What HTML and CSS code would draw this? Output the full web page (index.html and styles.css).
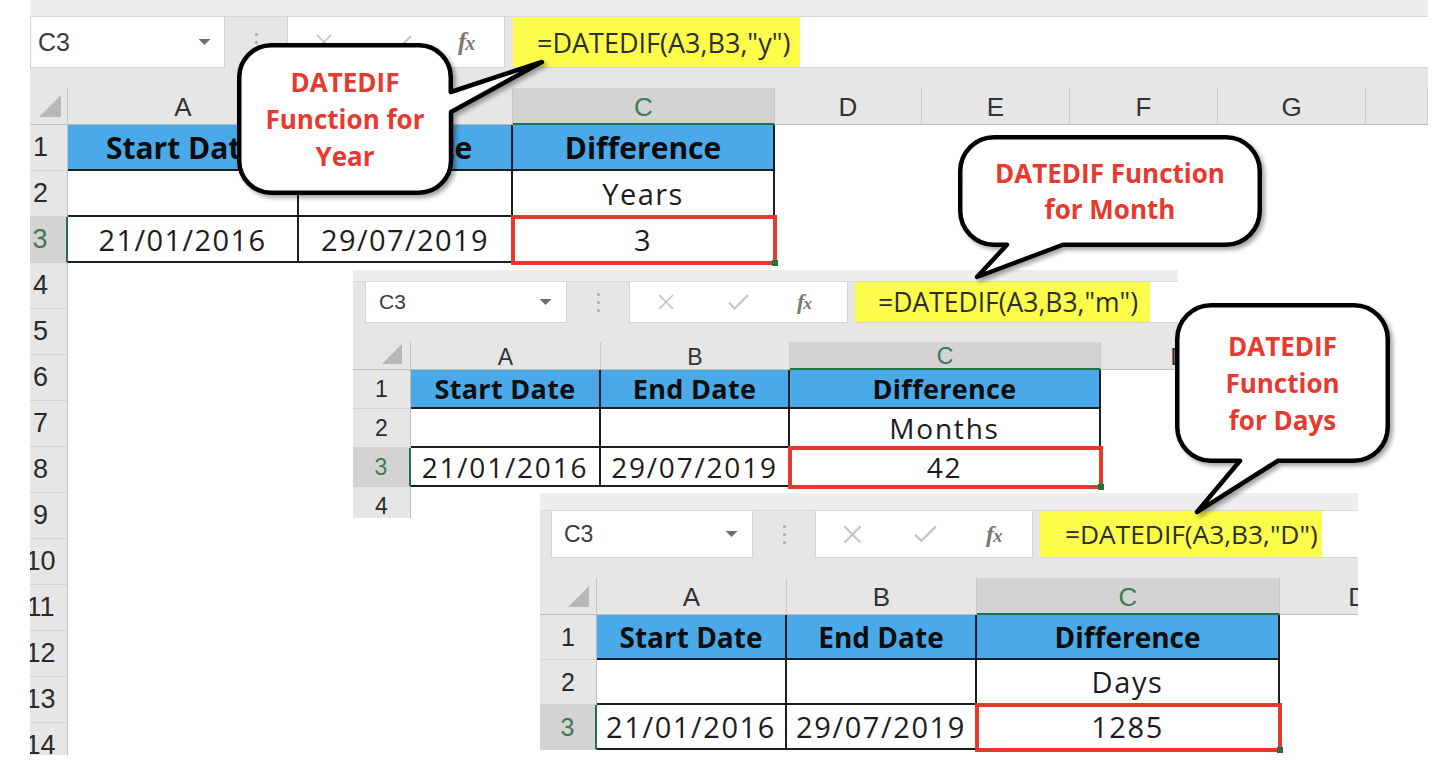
FILE: index.html
```html
<!DOCTYPE html>
<html lang="en">
<head>
<meta charset="utf-8">
<title>DATEDIF examples</title>
<link rel="stylesheet" href="styles.css">
</head>
<body>
<div class="canvas">

  <!-- Sheet 1: years -->
  <section class="sheet s1">
    <div class="strip"></div>
    <div class="fbar">
      <div class="namebox"><span class="ref">C3</span><svg class="caret" viewBox="0 0 12 6"><path d="M0 0H12L6 6Z"/></svg></div>
      <div class="grip"><i></i><i></i><i></i></div>
      <div class="fxbox">
        <svg class="ic-x" viewBox="0 0 20 20"><path d="M3 3L17 17M17 3L3 17"/></svg>
        <svg class="ic-ok" viewBox="0 0 24 20"><path d="M2 11L8 17L22 3"/></svg>
        <span class="fx"><i>f</i><i class="fx-x">x</i></span>
      </div>
      <div class="formula"><span class="hl">=DATEDIF(A3,B3,"y")</span></div>
    </div>
    <div class="gap"></div>
    <div class="grid">
      <div class="corner"><svg viewBox="0 0 10 10"><path d="M10 0V10H0Z"/></svg></div>
      <div class="ch">A</div><div class="ch">B</div><div class="ch sel">C</div><div class="ch">D</div><div class="ch">E</div><div class="ch">F</div><div class="ch">G</div><div class="ch"></div>

      <div class="rh">1</div><div class="c hd">Start Date</div><div class="c hd">End Date</div><div class="c hd">Difference</div>
      <div class="rh">2</div><div class="c"></div><div class="c"></div><div class="c">Years</div>
      <div class="rh sel">3</div><div class="c">21/01/2016</div><div class="c">29/07/2019</div><div class="c on">3</div>
      <div class="rh">4</div>
      <div class="rh">5</div>
      <div class="rh">6</div>
      <div class="rh">7</div>
      <div class="rh">8</div>
      <div class="rh">9</div>
      <div class="rh">10</div>
      <div class="rh">11</div>
      <div class="rh">12</div>
      <div class="rh">13</div>
      <div class="rh">14</div>
    </div>
  </section>

  <!-- Sheet 2: months -->
  <section class="sheet window s2">
    <div class="strip"></div>
    <div class="fbar">
      <div class="namebox"><span class="ref">C3</span><svg class="caret" viewBox="0 0 12 6"><path d="M0 0H12L6 6Z"/></svg></div>
      <div class="grip"><i></i><i></i><i></i></div>
      <div class="fxbox">
        <svg class="ic-x" viewBox="0 0 20 20"><path d="M3 3L17 17M17 3L3 17"/></svg>
        <svg class="ic-ok" viewBox="0 0 24 20"><path d="M2 11L8 17L22 3"/></svg>
        <span class="fx"><i>f</i><i class="fx-x">x</i></span>
      </div>
      <div class="formula"><span class="hl">=DATEDIF(A3,B3,"m")</span></div>
    </div>
    <div class="gap"></div>
    <div class="grid">
      <div class="corner"><svg viewBox="0 0 10 10"><path d="M10 0V10H0Z"/></svg></div>
      <div class="ch">A</div><div class="ch">B</div><div class="ch sel">C</div><div class="ch cut">D</div>

      <div class="rh">1</div><div class="c hd">Start Date</div><div class="c hd">End Date</div><div class="c hd">Difference</div>
      <div class="rh">2</div><div class="c"></div><div class="c"></div><div class="c">Months</div>
      <div class="rh sel">3</div><div class="c">21/01/2016</div><div class="c">29/07/2019</div><div class="c on">42</div>
      <div class="rh">4</div>
    </div>
  </section>

  <!-- Sheet 3: days -->
  <section class="sheet window s3">
    <div class="strip"></div>
    <div class="fbar">
      <div class="namebox"><span class="ref">C3</span><svg class="caret" viewBox="0 0 12 6"><path d="M0 0H12L6 6Z"/></svg></div>
      <div class="grip"><i></i><i></i><i></i></div>
      <div class="fxbox">
        <svg class="ic-x" viewBox="0 0 20 20"><path d="M3 3L17 17M17 3L3 17"/></svg>
        <svg class="ic-ok" viewBox="0 0 24 20"><path d="M2 11L8 17L22 3"/></svg>
        <span class="fx"><i>f</i><i class="fx-x">x</i></span>
      </div>
      <div class="formula"><span class="hl">=DATEDIF(A3,B3,"D")</span></div>
    </div>
    <div class="gap"></div>
    <div class="grid">
      <div class="corner"><svg viewBox="0 0 10 10"><path d="M10 0V10H0Z"/></svg></div>
      <div class="ch">A</div><div class="ch">B</div><div class="ch sel">C</div><div class="ch cut">D</div>

      <div class="rh">1</div><div class="c hd">Start Date</div><div class="c hd">End Date</div><div class="c hd">Difference</div>
      <div class="rh">2</div><div class="c"></div><div class="c"></div><div class="c">Days</div>
      <div class="rh sel">3</div><div class="c">21/01/2016</div><div class="c">29/07/2019</div><div class="c on">1285</div>
    </div>
  </section>

  <!-- Callouts -->
  <div class="callout co1">
    <svg class="bubble" width="216" height="152"><path d="M34 2.25H182A32 32 0 0 1 213.75 34V49L305 19L214 69V118A32 32 0 0 1 182 149.75H34A32 32 0 0 1 2.25 118V34A32 32 0 0 1 34 2.25Z"/></svg>
    <div class="co-text">DATEDIF<br>Function for<br>Year</div>
  </div>

  <div class="callout co2">
    <svg class="bubble" width="304" height="112"><path d="M36 2.25H268A34 34 0 0 1 301.75 36V76A34 34 0 0 1 268 109.75H105L19 142L49 109.75H36A34 34 0 0 1 2.25 76V36A34 34 0 0 1 36 2.25Z"/></svg>
    <div class="co-text">DATEDIF Function<br>for Month</div>
  </div>

  <div class="callout co3">
    <svg class="bubble" width="215" height="160"><path d="M36 2.25H179A34 34 0 0 1 212.75 36V124A34 34 0 0 1 179 157.75H103L22 209L65 157.75H36A34 34 0 0 1 2.25 124V36A34 34 0 0 1 36 2.25Z"/></svg>
    <div class="co-text">DATEDIF<br>Function<br>for Days</div>
  </div>

</div>
</body>
</html>
```

FILE: styles.css
```css
* { box-sizing: border-box; }

html, body {
  margin: 0;
  padding: 0;
  background: #ffffff;
}

.canvas {
  position: relative;
  width: 1436px;
  height: 772px;
  overflow: hidden;
  background: #ffffff;
}

/* ---------- sheet frame ---------- */
.sheet {
  background: #ffffff;
  overflow: hidden;
  display: flex;
  flex-direction: column;
}

.s1 {
  --strip: 17px; --fbar: 51px; --gap: 20px; --hdr: 37px; --row: 46px;
  --nb-ml: 0px; --nb-w: 195px; --nb-pl: 7px; --nb-pr: 13px; --nb-fs: 25px;
  --grip-w: 62px; --fx-w: 218px; --fgap: 8px;
  --hl-w: 287px; --hl-pl: 24px; --f-fs: 27px;
  --x-pl: 26px; --x-w: 20px; --x-gap: 57px; --ok-w: 22px; --ok-gap: 45px; --fx-fs: 25px;
  --cols: 38px 231px 214px 262px 147px 148px 148px 148px 62px;
  --rh-pr: 16px;
  --cl-fs: 26px; --rn-fs: 27px;
  --hd-fs: 30px; --hd-ls: 0px;
  --cell-fs: 29px; --ls: 1.4px;
  --tri: 22px; --tri-r: 6px; --tri-b: 7px;
  width: 1398px;
  height: 755px;
  margin-left: 30px;
}

.window {
  position: absolute;
}

.s2 {
  --strip: 12px; --fbar: 41px; --gap: 19px; --hdr: 28px; --row: 39px;
  --nb-ml: 12px; --nb-w: 202px; --nb-pl: 13px; --nb-pr: 14px; --nb-fs: 21px;
  --grip-w: 62px; --fx-w: 219px; --fgap: 7px;
  --hl-w: 295px; --hl-pl: 23px; --f-fs: 26.5px;
  --x-pl: 26px; --x-w: 20px; --x-gap: 51px; --ok-w: 23px; --ok-gap: 47px; --fx-fs: 22px;
  --cols: 58px 190px 189px 311px 77px;
  --rh-pr: 0px;
  --cl-fs: 23px; --rn-fs: 23px;
  --hd-fs: 27px; --hd-ls: 0.3px;
  --cell-fs: 28px; --ls: 1.8px;
  --tri: 20px; --tri-r: 8px; --tri-b: 5px;
  left: 353px;
  top: 270px;
  width: 825px;
  height: 248px;
}

.s3 {
  --strip: 18px; --fbar: 47px; --gap: 20px; --hdr: 37px; --row: 45px;
  --nb-ml: 11px; --nb-w: 202px; --nb-pl: 12px; --nb-pr: 14px; --nb-fs: 23px;
  --grip-w: 62px; --fx-w: 218px; --fgap: 7px;
  --hl-w: 282px; --hl-pl: 25px; --f-fs: 26.3px;
  --x-pl: 25px; --x-w: 23px; --x-gap: 49px; --ok-w: 25px; --ok-gap: 48px; --fx-fs: 24px;
  --cols: 57px 190px 190px 303px 78px;
  --rh-pr: 0px;
  --cl-fs: 26px; --rn-fs: 25px;
  --hd-fs: 28px; --hd-ls: 0px;
  --cell-fs: 29px; --ls: 1.6px;
  --tri: 21px; --tri-r: 7px; --tri-b: 7px;
  left: 540px;
  top: 493px;
  width: 818px;
  height: 262px;
}

/* ---------- formula bar ---------- */
.strip {
  flex: 0 0 var(--strip);
  background: #eeeeee;
  border-bottom: 1px solid #d8d8d8;
}

.fbar {
  flex: 0 0 var(--fbar);
  display: flex;
  align-items: stretch;
  background: #e6e6e6;
}

.namebox {
  margin-left: var(--nb-ml);
  width: var(--nb-w);
  background: #ffffff;
  border: 1px solid #d4d4d4;
  border-top: 0;
  display: flex;
  align-items: center;
  justify-content: space-between;
  padding: 0 var(--nb-pr) 0 var(--nb-pl);
  font-family: "Liberation Sans", Arial, sans-serif;
  font-size: var(--nb-fs);
  color: #3c3c3c;
}

.caret {
  width: 13px;
  height: 6px;
  fill: #6f6f6f;
}

.grip {
  width: var(--grip-w);
  display: flex;
  flex-direction: column;
  align-items: center;
  justify-content: center;
  gap: 5px;
}

.grip i {
  display: block;
  width: 3px;
  height: 3px;
  border-radius: 50%;
  background: #a9a9a9;
}

.fxbox {
  width: var(--fx-w);
  background: #ffffff;
  border: 1px solid #d4d4d4;
  border-top: 0;
  display: flex;
  align-items: center;
  padding-left: var(--x-pl);
}

.ic-x {
  width: var(--x-w);
  height: var(--x-w);
  fill: none;
  stroke: #c3c3c3;
  stroke-width: 1.7;
}

.ic-ok {
  width: var(--ok-w);
  height: calc(var(--ok-w) * 0.85);
  margin-left: var(--x-gap);
  fill: none;
  stroke: #c3c3c3;
  stroke-width: 2.2;
}

.fx {
  margin-left: var(--ok-gap);
  font-family: "Liberation Serif", "Times New Roman", serif;
  font-size: var(--fx-fs);
  font-weight: 700;
  color: #777777;
  letter-spacing: -1px;
}

.fx-x {
  font-size: 0.8em;
}

.formula {
  flex: 1;
  margin-left: var(--fgap);
  background: #ffffff;
  border-bottom: 1px solid #d4d4d4;
  display: flex;
  align-items: stretch;
}

.hl {
  width: var(--hl-w);
  background: #fcfc4a;
  display: flex;
  align-items: center;
  padding-left: var(--hl-pl);
  font-family: "Open Sans", "Liberation Sans", sans-serif;
  font-size: var(--f-fs);
  color: #2e2e2e;
  white-space: nowrap;
}

.gap {
  flex: 0 0 var(--gap);
  background: #e6e6e6;
}

/* ---------- grid ---------- */
.grid {
  flex: 1;
  display: grid;
  grid-template-columns: var(--cols);
  grid-template-rows: var(--hdr);
  grid-auto-rows: var(--row);
  background: #ffffff;
  align-content: start;
}

.corner {
  position: relative;
  background: #e6e6e6;
  border-right: 1px solid #c4c4c4;
  border-bottom: 1px solid #bdbdbd;
}

.corner svg {
  position: absolute;
  right: var(--tri-r);
  bottom: var(--tri-b);
  width: var(--tri);
  height: var(--tri);
  fill: #b7b7b7;
}

.ch {
  background: #e6e6e6;
  border-right: 1px solid #c8c8c8;
  border-bottom: 1px solid #bdbdbd;
  display: flex;
  align-items: center;
  justify-content: center;
  padding-top: 3px;
  font-family: "Liberation Sans", Arial, sans-serif;
  font-size: var(--cl-fs);
  color: #333333;
  white-space: nowrap;
  overflow: hidden;
}

.ch.sel {
  background: #d3d3d3;
  color: #3f7a56;
  border-bottom: 2px solid #217346;
}

.ch.cut {
  justify-content: flex-end;
  margin-right: -10px;
}

.rh {
  grid-column: 1;
  background: #e6e6e6;
  border-right: 1px solid #bdbdbd;
  border-bottom: 1px solid #d2d2d2;
  display: flex;
  align-items: center;
  justify-content: center;
  padding-right: var(--rh-pr);
  font-family: "Liberation Sans", Arial, sans-serif;
  font-size: var(--rn-fs);
  color: #2a2a2a;
  white-space: nowrap;
}

.rh.sel {
  background: #d3d3d3;
  color: #3f7a56;
  border-right: 2px solid #217346;
}

.c {
  position: relative;
  display: flex;
  align-items: center;
  justify-content: center;
  border-right: 2px solid #1e1e1e;
  border-bottom: 2px solid #1e1e1e;
  font-family: "Open Sans", "Liberation Sans", sans-serif;
  font-size: var(--cell-fs);
  letter-spacing: var(--ls);
  color: #1c1c1c;
  white-space: nowrap;
}

.c.hd {
  background: #4aa9e8;
  font-weight: 700;
  font-size: var(--hd-fs);
  letter-spacing: var(--hd-ls);
  color: #0d0d0d;
}

.c.on {
  outline: 4px solid #e6382b;
  outline-offset: -2px;
  z-index: 1;
}

.c.on::after {
  content: "";
  position: absolute;
  right: -5px;
  bottom: -5px;
  width: 6px;
  height: 6px;
  background: #217346;
}

/* ---------- callouts ---------- */
.callout {
  position: absolute;
  z-index: 5;
  display: flex;
  align-items: center;
  justify-content: center;
}

.bubble {
  position: absolute;
  left: 0;
  top: 0;
  overflow: visible;
  filter: drop-shadow(3px 3px 2px rgba(0, 0, 0, 0.35));
}

.bubble path {
  fill: #ffffff;
  stroke: #000000;
  stroke-width: 4.5;
  stroke-linejoin: round;
}

.co-text {
  position: relative;
  text-align: center;
  font-family: "Open Sans", "Liberation Sans", sans-serif;
  font-weight: 700;
  font-size: 26px;
  line-height: 37px;
  color: #e8392f;
}

.co1 { left: 237px; top: 43px; width: 216px; height: 152px; }
.co2 { left: 958px; top: 135px; width: 304px; height: 112px; }
.co2 .co-text { line-height: 36px; }
.co3 { left: 1175px; top: 303px; width: 215px; height: 160px; }
```
